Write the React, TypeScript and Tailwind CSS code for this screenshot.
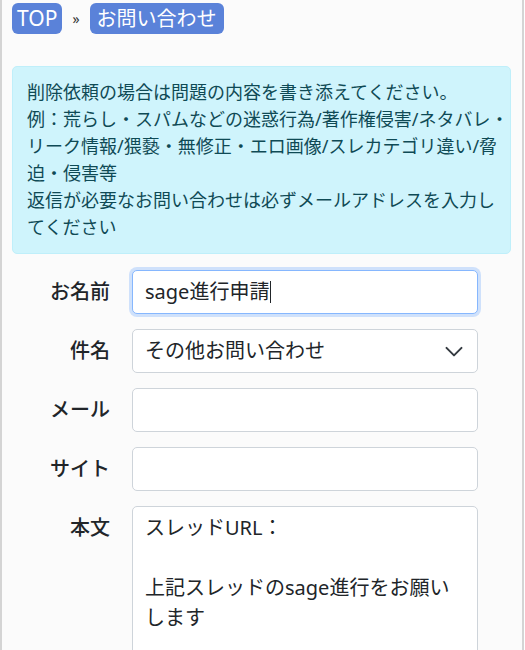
const fields = [
  { label: "メール" },
  { label: "サイト" },
];

export default function App() {
  return (
    <div
      className="w-[524px] min-h-[650px] border-x-2 border-[#d4d4d4] bg-[#fbfbfb] text-[#212529] px-[10px]"
      style={{ fontFamily: '"Noto Sans", "Noto Sans CJK JP", sans-serif' }}
    >
      {/* Breadcrumb */}
      <div className="flex items-center pt-[3px] h-[34px]">
        <span className="h-[31px] flex items-center px-[5px] rounded-[6px] bg-[#5a82d9] text-white text-[21px] leading-none">
          TOP
        </span>
        <span className="mx-[10px] text-[14px] text-[#333] leading-none">»</span>
        <span className="h-[31px] flex items-center px-[7px] rounded-[6px] bg-[#5a82d9] text-white text-[20px] leading-none">
          お問い合わせ
        </span>
      </div>

      {/* Notice */}
      <div className="mt-[32px] w-[499px] whitespace-nowrap overflow-hidden rounded-[5px] border border-[#bfeffa] bg-[#cff4fc] pl-[14px] pr-[4px] py-3 text-[18px] leading-[27px] text-[#0f4a55]">
        削除依頼の場合は問題の内容を書き添えてください。
        <br />
        例：荒らし・スパムなどの迷惑行為/著作権侵害/ネタバレ・
        <br />
        リーク情報/猥褻・無修正・エロ画像/スレカテゴリ違い/脅
        <br />
        迫・侵害等
        <br />
        返信が必要なお問い合わせは必ずメールアドレスを入力し
        <br />
        てください
      </div>

      {/* Form */}
      <div className="mt-4 grid grid-cols-[98px_346px] gap-x-[22px] gap-y-[15px] text-[20px] leading-[30px]">
        <label className="flex items-center justify-end h-[44px] font-medium">お名前</label>
        <div className="h-[44px] flex items-center rounded-[5px] border border-[#86b7fe] bg-white px-3 shadow-[0_0_0_3px_rgba(13,110,253,0.18)]">
          <span>sage進行申請</span>
          <span className="ml-px w-px h-[22px] bg-[#212529]" />
        </div>

        <label className="flex items-center justify-end h-[44px] font-medium">件名</label>
        <div className="h-[44px] flex items-center justify-between rounded-[5px] border border-[#ced4da] bg-white pl-3 pr-[13px]">
          <span>その他お問い合わせ</span>
          <svg width="20" height="20" viewBox="0 0 16 16" fill="none" stroke="#343a40" strokeWidth="1.6" strokeLinecap="round" strokeLinejoin="round">
            <path d="M2 5.5l6 6 6-6" />
          </svg>
        </div>

        {fields.map((f) => (
          <>
            <label key={f.label + "l"} className="flex items-center justify-end h-[44px] font-medium">
              {f.label}
            </label>
            <input
              key={f.label + "i"}
              className="h-[44px] rounded-[5px] border border-[#ced4da] bg-white px-3 outline-none"
            />
          </>
        ))}

        <label className="flex items-start justify-end h-[44px] pt-[7px] font-medium">本文</label>
        <textarea
          readOnly
          className="h-[200px] resize-none rounded-[5px] border border-[#ced4da] bg-white px-3 py-[6px] outline-none"
          defaultValue={"スレッドURL：\n\n上記スレッドのsage進行をお願いします"}
        />
      </div>
    </div>
  );
}
